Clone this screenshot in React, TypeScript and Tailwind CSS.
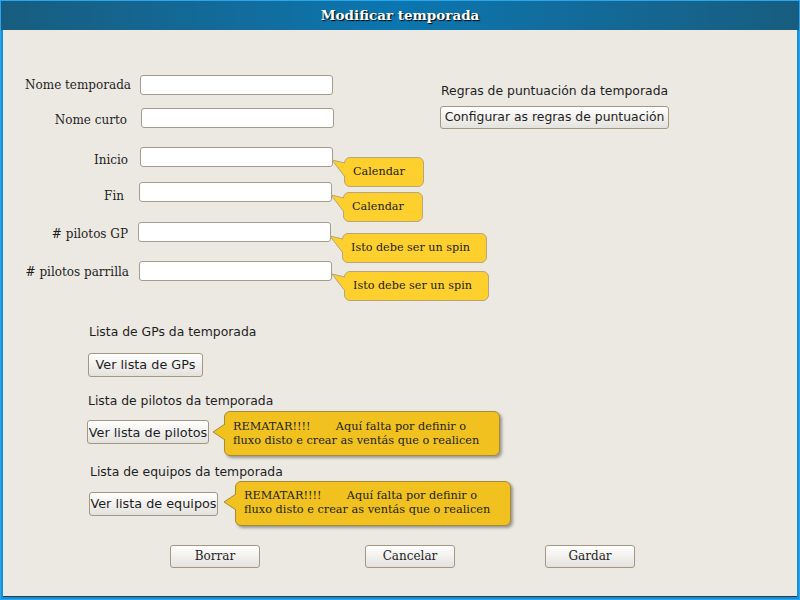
import React from 'react';

const serif = "font-['DejaVu_Serif',serif]";
const sans = "font-['DejaVu_Sans',sans-serif]";

type RowProps = {
  label: string;
  rowClass: string;
  labelClass: string;
  inputClass: string;
  children?: React.ReactNode;
};

function FieldRow({ label, rowClass, labelClass, inputClass, children }: RowProps) {
  return (
    <div className={`relative flex items-center h-[20px] ${rowClass}`}>
      <span className={`text-right text-[12px] text-[#1e1e1e] whitespace-nowrap ${serif} ${labelClass}`}>{label}</span>
      <div className={`w-[193px] h-[20px] bg-white border border-[#a59c8c] rounded-[3px] ${inputClass}`} />
      {children}
    </div>
  );
}

function Note({ text, boxClass }: { text: string; boxClass: string }) {
  return (
    <div className={`absolute ${boxClass}`}>
      <div className={`w-full h-full bg-[#fdd02e] border border-[#b8a57a] rounded-[6px] flex items-center pl-[8px] text-[11.2px] text-[#222] ${serif}`}>
        {text}
      </div>
      <svg className="absolute left-[-13px] top-0" width="15" height="24" viewBox="0 0 15 24">
        <polygon points="1,3 14,6 14,20" fill="#fdd02e" />
        <polyline points="14,6 1,3 14,20" fill="none" stroke="#b8a57a" strokeWidth="1" />
      </svg>
    </div>
  );
}

function Btn({ children, className }: { children: React.ReactNode; className: string }) {
  return (
    <div className={`flex items-center justify-center bg-linear-to-b from-white to-[#e4e2dd] border border-[#a39782] rounded-[3px] text-[#1e1e1e] ${className}`}>
      {children}
    </div>
  );
}

function Warn({ boxClass }: { boxClass: string }) {
  return (
    <div className={`absolute ${boxClass}`}>
      <div className={`w-full h-full bg-[#f1c21f] border border-[#a68a3c] rounded-[6px] shadow-[2px_2px_3px_rgba(0,0,0,0.35)] flex flex-col justify-center pl-[8px] text-[11.3px] leading-[14px] text-[#222] ${serif}`}>
        <span className="whitespace-pre">{'REMATAR!!!!       Aquí falta por definir o'}</span>
        <span className="whitespace-pre">fluxo disto e crear as ventás que o realicen</span>
      </div>
      <svg className="absolute left-[-12px] top-0" width="14" height="36" viewBox="0 0 14 36">
        <polygon points="1,21 13,13 13,29" fill="#f1c21f" />
        <polyline points="13,13 1,21 13,29" fill="none" stroke="#a68a3c" strokeWidth="1" />
      </svg>
    </div>
  );
}

export default function App() {
  return (
    <div className="w-[800px] h-[600px] flex flex-col bg-[#1590d6] border border-[#2aa6ee]">
      <div className="h-[29px] shrink-0 flex items-center justify-center bg-linear-to-r from-[#175d7f] via-[#0b76b0] to-[#175d7f]">
        <span className={`text-white font-bold text-[13.5px] [text-shadow:1px_1px_1px_#000] ${serif}`}>Modificar temporada</span>
      </div>
      <div className="flex-1 mx-[2px] mb-[2px] bg-[#ece9e3] border-b border-[#2b3a44] flex flex-col">
        <div className="flex">
          <div className="w-[340px] flex flex-col">
            <FieldRow label="Nome temporada" rowClass="mt-[45px]" labelClass="w-[128px]" inputClass="ml-[9px]" />
            <FieldRow label="Nome curto" rowClass="mt-[13px]" labelClass="w-[124px] mt-[4px]" inputClass="ml-[14px]" />
            <FieldRow label="Inicio" rowClass="mt-[19px]" labelClass="w-[125px] mt-[6px]" inputClass="ml-[12px]">
              <Note text="Calendar" boxClass="left-[341px] top-[10px] w-[80px] h-[30px]" />
            </FieldRow>
            <FieldRow label="Fin" rowClass="mt-[15px]" labelClass="w-[121px] mt-[7px]" inputClass="ml-[15px]">
              <Note text="Calendar" boxClass="left-[340px] top-[10px] w-[80px] h-[30px]" />
            </FieldRow>
            <FieldRow label="# pilotos GP" rowClass="mt-[20px]" labelClass="w-[125px] mt-[4px]" inputClass="ml-[10px]">
              <Note text="Isto debe ser un spin" boxClass="left-[339px] top-[11px] w-[145px] h-[30px]" />
            </FieldRow>
            <FieldRow label="# pilotos parrilla" rowClass="mt-[19px]" labelClass="w-[126px] mt-[2px]" inputClass="ml-[10px]">
              <Note text="Isto debe ser un spin" boxClass="left-[341px] top-[10px] w-[145px] h-[30px]" />
            </FieldRow>
          </div>
          <div className="ml-[97px] mt-[52px] flex flex-col items-start">
            <span className={`text-[12.4px] text-[#1e1e1e] ml-[1px] ${sans}`}>Regras de puntuación da temporada</span>
            <Btn className={`mt-[5px] w-[229px] h-[23px] text-[12.4px] ${sans}`}>Configurar as regras de puntuación</Btn>
          </div>
        </div>

        <div className="flex flex-col items-start">
          <span className={`mt-[42px] ml-[86px] text-[12.4px] text-[#1e1e1e] ${sans}`}>Lista de GPs da temporada</span>
          <Btn className={`mt-[11px] ml-[85px] w-[115px] h-[24px] text-[12.8px] ${sans}`}>Ver lista de GPs</Btn>

          <span className={`mt-[15px] ml-[85px] text-[12.4px] text-[#1e1e1e] ${sans}`}>Lista de pilotos da temporada</span>
          <div className="relative mt-[10px] ml-[84px]">
            <Btn className={`w-[122px] h-[24px] text-[12.8px] ${sans}`}>Ver lista de pilotos</Btn>
            <Warn boxClass="left-[137px] top-[-9px] w-[276px] h-[45px]" />
          </div>

          <span className={`mt-[19px] ml-[87px] text-[12.4px] text-[#1e1e1e] ${sans}`}>Lista de equipos da temporada</span>
          <div className="relative mt-[10px] ml-[86px]">
            <Btn className={`w-[129px] h-[24px] text-[12.8px] ${sans}`}>Ver lista de equipos</Btn>
            <Warn boxClass="left-[146px] top-[-11px] w-[276px] h-[45px]" />
          </div>
        </div>

        <div className={`mt-[29px] flex text-[12px] ${serif}`}>
          <Btn className="ml-[167px] w-[90px] h-[23px]">Borrar</Btn>
          <Btn className="ml-[105px] w-[90px] h-[23px]">Cancelar</Btn>
          <Btn className="ml-[90px] w-[90px] h-[23px]">Gardar</Btn>
        </div>
      </div>
    </div>
  );
}
